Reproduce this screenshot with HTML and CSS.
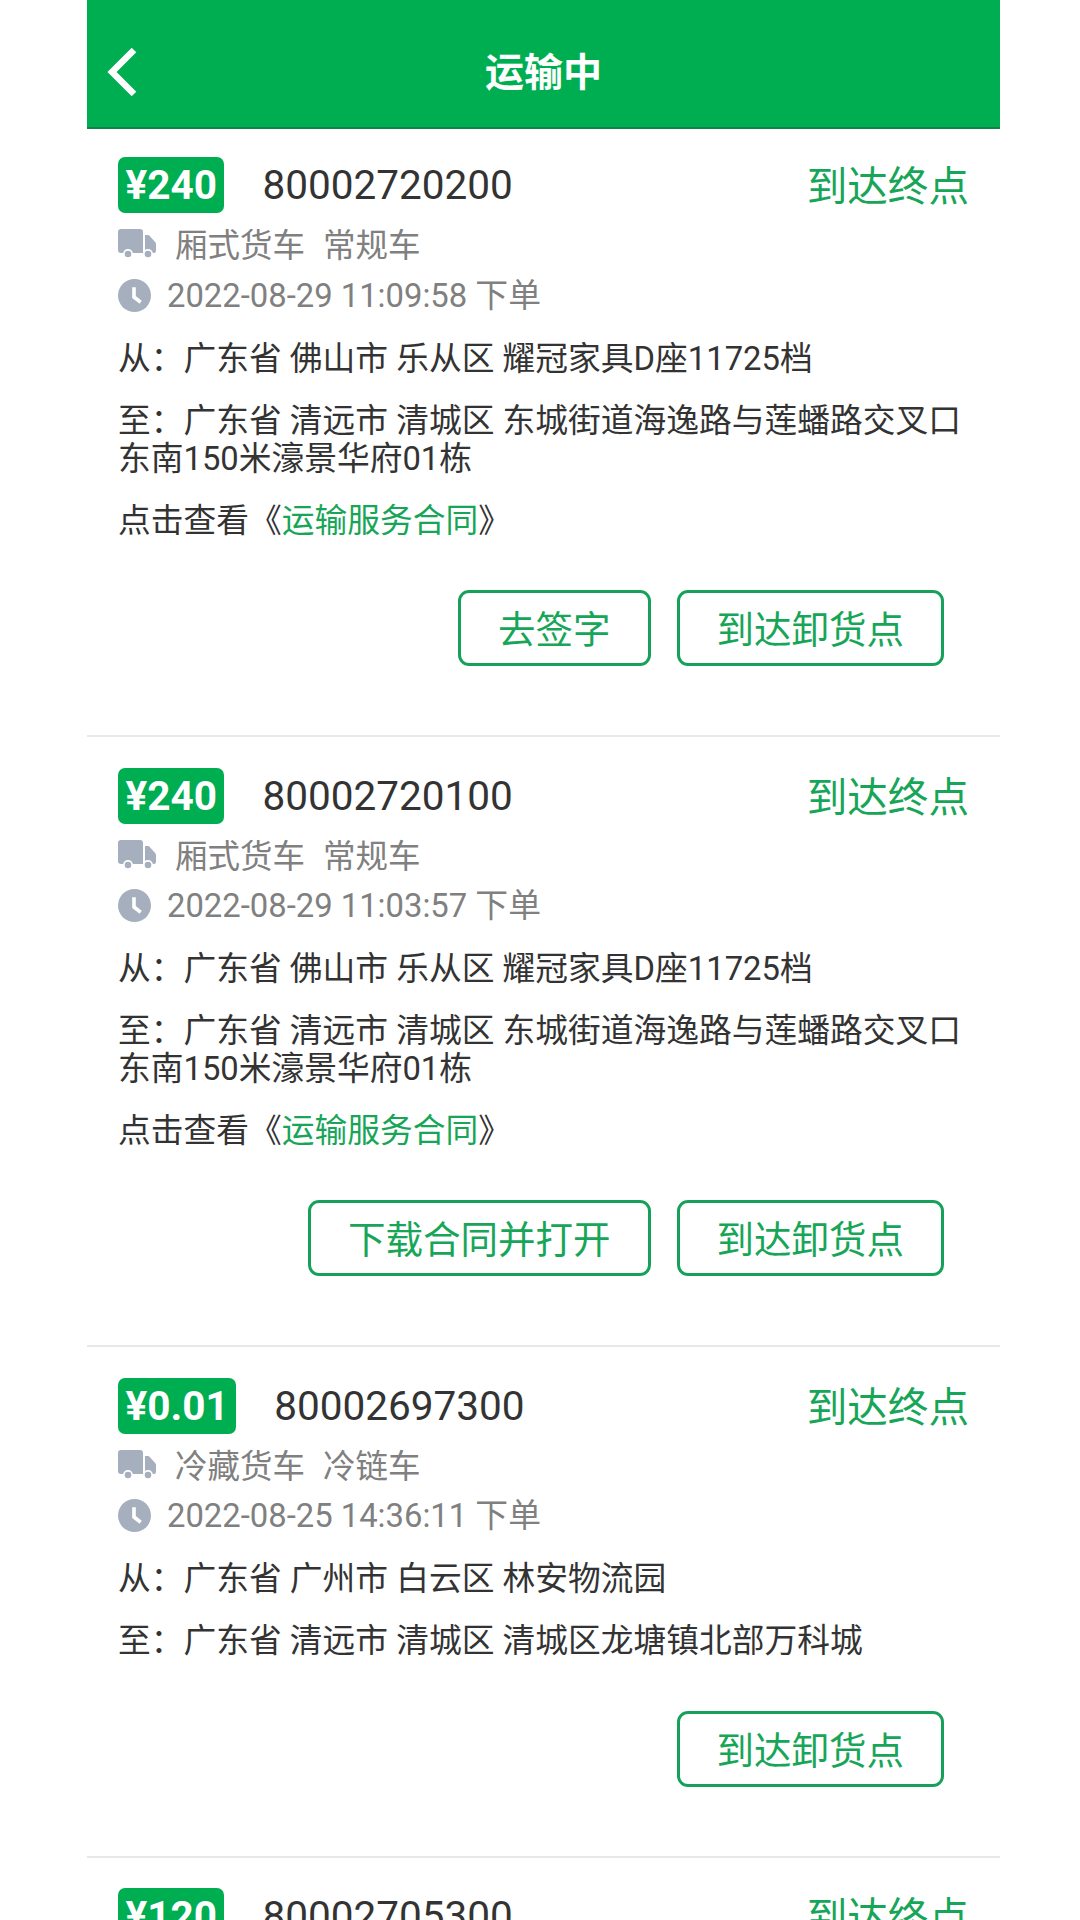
FILE: index.html
```html
<!DOCTYPE html>
<html lang="zh-CN">
<head>
  <meta charset="UTF-8" />
  <meta name="viewport" content="width=device-width, initial-scale=1.0"/>
  <title>运输中</title>
  <link rel="stylesheet" href="styles.css">
</head>
<body>
  <svg class="defs" width="0" height="0">
    <symbol id="truck" viewBox="0 0 38 30">
      <path d="M3 0h19a3 3 0 0 1 3 3v21H3a3 3 0 0 1-3-3V3a3 3 0 0 1 3-3z"/>
      <path d="M27 6h3a2 2 0 0 1 1.500.7l5.600 6.300a3 3 0 0 1 .9 2v7a2 2 0 0 1-2 2h-9z"/>
      <circle cx="10" cy="25" r="4.200" stroke="#fff" stroke-width="1.800"/>
      <circle cx="30" cy="25" r="4.200" stroke="#fff" stroke-width="1.800"/>
    </symbol>
    <symbol id="clock" viewBox="0 0 32 32">
      <circle cx="16" cy="16" r="16"/>
      <path d="M15.500 8v9.500l6.500 5" fill="none" stroke="#fff" stroke-width="3.500"/>
    </symbol>
  </svg>

  <div class="page">
    <header class="topbar">
      <a class="back" href="#">
        <svg width="32" height="50" viewBox="0 0 32 50"><path d="M28 3 6 25l22 22" fill="none" stroke="#fff" stroke-width="6.500"/></svg>
      </a>
      <h1>运输中</h1>
    </header>

    <section class="order">
      <div class="order-head">
        <span class="price">¥240</span>
        <span class="order-no">80002720200</span>
        <a class="arrive" href="#">到达终点</a>
      </div>
      <div class="meta meta-truck">
        <svg class="icon-truck"><use href="#truck"/></svg>
        <span>厢式货车</span><span>常规车</span>
      </div>
      <div class="meta meta-time">
        <svg class="icon-clock"><use href="#clock"/></svg>
        <span>2022-08-29 11:09:58 下单</span>
      </div>
      <p class="addr">从：广东省 佛山市 乐从区 耀冠家具D座11725档</p>
      <p class="addr">至：广东省 清远市 清城区 东城街道海逸路与莲蟠路交叉口东南150米濠景华府01栋</p>
      <p class="addr">点击查看《<a class="link" href="#">运输服务合同</a>》</p>
      <div class="actions">
        <button class="btn">去签字</button>
        <button class="btn">到达卸货点</button>
      </div>
    </section>

    <section class="order">
      <div class="order-head">
        <span class="price">¥240</span>
        <span class="order-no">80002720100</span>
        <a class="arrive" href="#">到达终点</a>
      </div>
      <div class="meta meta-truck">
        <svg class="icon-truck"><use href="#truck"/></svg>
        <span>厢式货车</span><span>常规车</span>
      </div>
      <div class="meta meta-time">
        <svg class="icon-clock"><use href="#clock"/></svg>
        <span>2022-08-29 11:03:57 下单</span>
      </div>
      <p class="addr">从：广东省 佛山市 乐从区 耀冠家具D座11725档</p>
      <p class="addr">至：广东省 清远市 清城区 东城街道海逸路与莲蟠路交叉口东南150米濠景华府01栋</p>
      <p class="addr">点击查看《<a class="link" href="#">运输服务合同</a>》</p>
      <div class="actions">
        <button class="btn">下载合同并打开</button>
        <button class="btn">到达卸货点</button>
      </div>
    </section>

    <section class="order">
      <div class="order-head">
        <span class="price">¥0.01</span>
        <span class="order-no">80002697300</span>
        <a class="arrive" href="#">到达终点</a>
      </div>
      <div class="meta meta-truck">
        <svg class="icon-truck"><use href="#truck"/></svg>
        <span>冷藏货车</span><span>冷链车</span>
      </div>
      <div class="meta meta-time">
        <svg class="icon-clock"><use href="#clock"/></svg>
        <span>2022-08-25 14:36:11 下单</span>
      </div>
      <p class="addr">从：广东省 广州市 白云区 林安物流园</p>
      <p class="addr">至：广东省 清远市 清城区 清城区龙塘镇北部万科城</p>
      <div class="actions">
        <button class="btn">到达卸货点</button>
      </div>
    </section>

    <section class="order">
      <div class="order-head">
        <span class="price">¥120</span>
        <span class="order-no">80002705300</span>
        <a class="arrive" href="#">到达终点</a>
      </div>
    </section>
  </div>
</body>
</html>
```

FILE: styles.css
```css
html, body {
  margin: 0;
  height: 1920px;
  overflow: hidden;
  background: #fff;
}
body {
  font-family: Roboto, "Noto Sans CJK SC", sans-serif;
  color: #333;
}
.defs {
  display: block;
  height: 0;
}
.page {
  width: 913px;
  margin-left: 87px;
}
.topbar {
  display: flex;
  align-items: center;
  justify-content: center;
  position: relative;
  box-sizing: border-box;
  height: 129px;
  padding-top: 10px;
  background: #00ae52;
  border-bottom: 2px solid #14804a;
}
.topbar h1 {
  margin: 0;
  font-size: 39px;
  font-weight: 700;
  color: #fff;
}
.back {
  position: absolute;
  left: 19px;
  top: 47px;
  line-height: 0;
}
.order {
  padding: 28px 31px 0;
  border-bottom: 2px solid #e8e8e8;
  height: 578px;
}
.order:nth-of-type(n+2) {
  padding-top: 31px;
  height: 577px;
}
.order:nth-of-type(n+2) .meta-time {
  margin-top: 10px;
}
.order:nth-of-type(3) {
  height: 478px;
}
.order:nth-of-type(3) .actions {
  margin-top: 51px;
}
.order:nth-of-type(4) {
  padding-top: 30px;
}
.order-head {
  display: flex;
  align-items: center;
  height: 56px;
}
.price {
  padding: 0 7.500px;
  height: 56px;
  line-height: 56px;
  border-radius: 7px;
  background: #00ae52;
  color: #fff;
  font-size: 40.500px;
  font-weight: 700;
}
.order-no {
  margin-left: 38px;
  font-size: 40.500px;
  color: #333;
}
.arrive {
  margin-left: auto;
  margin-bottom: 4px;
  font-size: 40.600px;
  color: #17a658;
  text-decoration: none;
}
.meta {
  display: flex;
  align-items: center;
  color: #808080;
}
.meta span {
  margin-bottom: 3px;
}
.meta-truck {
  margin-top: 11px;
  height: 40px;
  font-size: 32.500px;
}
.meta-truck span {
  margin-right: 18px;
}
.meta-time {
  margin-top: 11px;
  height: 40px;
  font-size: 32.800px;
}
.meta-time span {
  margin-bottom: 5px;
}
.icon-truck {
  width: 38px;
  height: 30px;
  margin-right: 19px;
  fill: #a6afbd;
}
.icon-clock {
  width: 33px;
  height: 33px;
  margin-right: 16px;
  fill: #a6afbd;
}
.addr {
  margin: 0;
  margin-top: 24px;
  font-size: 32.750px;
  line-height: 38px;
  color: #333;
}
.meta-time + .addr {
  margin-top: 25px;
}
.link {
  color: #17a658;
  text-decoration: none;
}
.actions {
  display: flex;
  justify-content: flex-end;
  gap: 26px;
  margin-top: 50px;
  padding-right: 25px;
}
.btn {
  height: 76px;
  padding: 0 37px 3px;
  background: #fff;
  border: 3px solid #17a05a;
  border-radius: 11px;
  color: #17a658;
  font-family: inherit;
  font-size: 37.500px;
}
```
